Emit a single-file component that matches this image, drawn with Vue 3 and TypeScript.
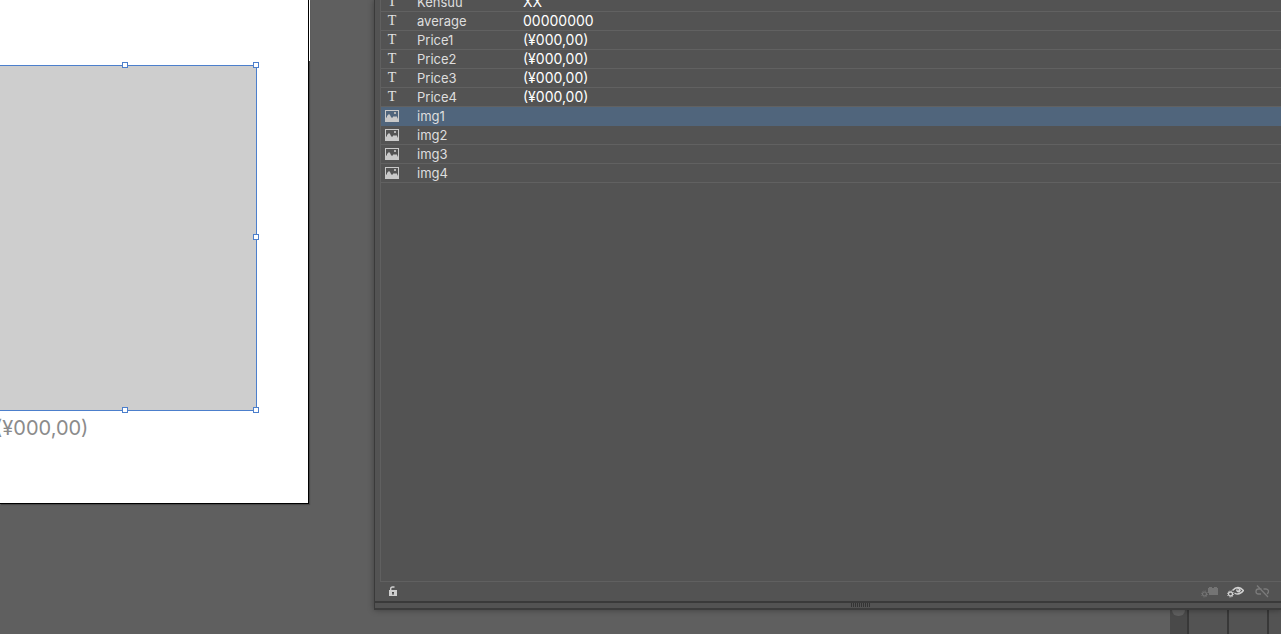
<script setup lang="ts">
interface Variable {
  name: string
  value: string
  kind: 'text' | 'image'
}

const variables: Variable[] = [
  { name: 'Kensuu', value: 'XX', kind: 'text' },
  { name: 'average', value: '00000000', kind: 'text' },
  { name: 'Price1', value: '(¥000,00)', kind: 'text' },
  { name: 'Price2', value: '(¥000,00)', kind: 'text' },
  { name: 'Price3', value: '(¥000,00)', kind: 'text' },
  { name: 'Price4', value: '(¥000,00)', kind: 'text' },
  { name: 'img1', value: '', kind: 'image' },
  { name: 'img2', value: '', kind: 'image' },
  { name: 'img3', value: '', kind: 'image' },
  { name: 'img4', value: '', kind: 'image' },
]
const selected = 'img1'
const handles = ['top mid', 'top end', 'center end', 'bottom mid', 'bottom end']
</script>

<template>
  <div class="app">
    <main class="workspace">
      <div class="artboard">
        <div class="selection">
          <span v-for="h in handles" :key="h" class="handle" :class="h"></span>
        </div>
        <div class="caption">(¥000,00)</div>
      </div>
      <div class="page-edge"></div>
    </main>

    <div class="side">
      <section class="panel">
        <div class="list">
          <table>
            <tbody>
              <tr v-for="v in variables" :key="v.name" :class="{ selected: v.name === selected }">
                <td class="kind">
                  <span v-if="v.kind === 'text'" class="type">T</span>
                  <svg v-else width="14" height="12" viewBox="0 0 14 12">
                    <rect x=".5" y=".5" width="13" height="11" fill="none" stroke="#c9c9c9" />
                    <path d="M1 11V8l1-1V6l2-2 1 1 1 2 1 1 2-2 1 1 1-1 1 1 1 2v2z" fill="#c9c9c9" />
                    <rect x="9" y="2" width="2" height="2" fill="#b4b4b4" />
                  </svg>
                </td>
                <td class="name">{{ v.name }}</td>
                <td class="value">{{ v.value }}</td>
              </tr>
            </tbody>
          </table>
        </div>
        <footer class="actions">
          <button aria-label="Unlock variables">
            <svg width="9" height="11" viewBox="0 0 9 11">
              <path d="M1.700 5V2.800Q1.700 1 3.500 1H5.500" fill="none" stroke="#cfcfcf" stroke-width="1.400" />
              <path d="M0 4h8v6H0z" fill="#cfcfcf" />
              <path d="M3 6h2v1.500h-.5V9h-1V7.500H3z" fill="#444" />
            </svg>
          </button>
          <span class="spacer"></span>
          <button aria-label="Make object dynamic" disabled>
            <svg width="17" height="12" viewBox="0 0 17 12">
              <circle cx="3.500" cy="8" r="2" fill="none" stroke="#747474" stroke-width="1.200" />
              <circle cx="3.500" cy="8" r="3.100" fill="none" stroke="#747474" stroke-dasharray="1 1.430" />
              <path d="M7 2h1V1h3v1h2V1h3v1h1v7H8V7H7z" fill="#747474" />
            </svg>
          </button>
          <button aria-label="Make visibility dynamic">
            <svg width="17" height="12" viewBox="0 0 17 12">
              <circle cx="3.500" cy="8" r="2" fill="none" stroke="#d2d2d2" stroke-width="1.300" />
              <circle cx="3.500" cy="8" r="3.100" fill="none" stroke="#d2d2d2" stroke-dasharray="1 1.430" />
              <path d="M5.500 4.500Q11-1.500 16.500 4.500 12 10 7.500 7" fill="none" stroke="#d2d2d2" stroke-width="1.400" />
              <circle cx="11.500" cy="4.300" r="2.200" fill="#d2d2d2" />
              <circle cx="11" cy="3.800" r=".8" fill="#535353" />
            </svg>
          </button>
          <button class="unbind" aria-label="Unbind variable" disabled>
            <svg width="15" height="13" viewBox="0 0 15 13">
              <path d="M2 .5 13 12M6.500 4H3.500A2.500 2.500 0 0 0 3.500 9H6M8.500 4h2.500a2.500 2.500 0 0 1 1 4.800" fill="none" stroke="#7b7b7b" stroke-width="1.300" />
            </svg>
          </button>
        </footer>
        <div class="resize"><span class="grip"></span></div>
      </section>
      <div class="dock">
        <span class="scroll"><span class="thumb"></span></span>
        <span class="cell"></span>
        <span class="cell"></span>
        <span class="cell last"></span>
      </div>
    </div>
  </div>
</template>

<style>
body {
  margin: 0;
  background: #5f5f5f;
}
</style>

<style scoped>
.app {
  display: grid;
  grid-template-columns: 374px minmax(0, 1fr);
  height: 100vh;
  overflow: hidden;
  background: #5f5f5f;
  font-family: Inter, "Noto Sans CJK JP", sans-serif;
}
.workspace {
  display: flex;
  align-items: flex-start;
}
.artboard {
  box-sizing: border-box;
  width: 309px;
  padding: 65px 51px 64px 0;
  background: #fff;
  border-right: 1px solid #000;
  border-bottom: 1px solid #000;
  box-shadow: 1px 1px 1px #484848;
}
.page-edge {
  position: relative;
  width: 1px;
  height: 61px;
  background: #fff;
}
.selection {
  position: relative;
  box-sizing: border-box;
  height: 346px;
  background: #cecece;
  border: 1px solid #4c7fcc;
  border-left: 0;
}
.handle {
  position: absolute;
  box-sizing: border-box;
  width: 6px;
  height: 6px;
  background: #fff;
  border: 1px solid #4c7fcc;
}
.top { top: -4px; }
.center { top: calc(50% - 4px); }
.bottom { bottom: -3px; }
.mid { left: 122px; }
.end { right: -3px; }
.caption {
  margin-left: -5px;
  padding-top: 2px;
  height: 26px;
  line-height: 30px;
  font-size: 20px;
  color: #8b8b8b;
}
.side {
  display: flex;
  flex-direction: column;
  min-width: 0;
}
.panel {
  flex: 1;
  min-height: 0;
  display: flex;
  flex-direction: column;
  background: #535353;
  border-left: 1px solid #3a3a3a;
  border-bottom: 2px solid #3c3c3c;
  box-shadow: 0 0 6px rgba(0, 0, 0, 0.35);
  z-index: 1;
}
.list {
  flex: 1;
  min-height: 0;
  margin-left: 5px;
  overflow: hidden;
  border-left: 1px solid #606060;
  border-bottom: 1px solid #606060;
}
table {
  width: 100%;
  margin-top: -7px;
  border-spacing: 0;
  table-layout: fixed;
}
td {
  box-sizing: border-box;
  height: 19px;
  padding: 0;
  line-height: 18px;
  border-bottom: 1px solid #616161;
  white-space: nowrap;
}
.kind {
  width: 36px;
  padding-left: 4px;
}
.kind svg {
  display: block;
}
.type {
  display: block;
  width: 14px;
  text-align: center;
  font: 14px/18px "Liberation Serif", serif;
  color: #e2e2e2;
}
.name {
  width: 106px;
  font-size: 13px;
  color: #dedede;
}
.value {
  font-size: 14px;
  color: #fff;
}
.selected td {
  background: #50657c;
  border-color: #50657c;
}
.actions {
  display: flex;
  align-items: center;
  height: 19px;
  padding: 0 11px 0 14px;
}
.actions button {
  display: flex;
  margin: 0 0 0 9px;
  padding: 0;
  border: 0;
  background: none;
}
.actions button:first-child {
  margin-left: 0;
}
.actions .unbind {
  margin-left: 11px;
}
.spacer {
  flex: 1;
}
.resize {
  display: flex;
  justify-content: center;
  height: 5px;
  border-top: 2px solid #3a3a3a;
}
.grip {
  width: 20px;
  height: 4px;
  margin-left: 66px;
  background: repeating-linear-gradient(90deg, #343434 0 1px, #535353 1px 2px);
}
.dock {
  display: flex;
  justify-content: flex-end;
  height: 24px;
}
.scroll {
  width: 17px;
  background: #494949;
}
.thumb {
  display: block;
  width: 13px;
  height: 6px;
  margin-left: 2px;
  border-radius: 0 0 7px 7px;
  background: #5f5f5f;
}
.cell {
  box-sizing: border-box;
  width: 40px;
  background: #535353;
  border-left: 2px solid #383838;
}
.last {
  width: 14px;
}
</style>
